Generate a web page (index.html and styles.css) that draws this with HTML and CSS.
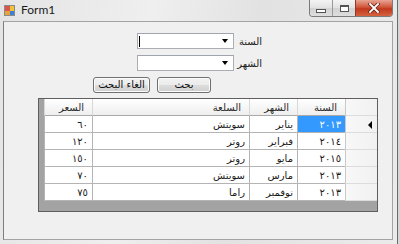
FILE: index.html
```html
<!DOCTYPE html>
<html lang="ar">
<head>
  <meta charset="UTF-8" />
  <title>Form1</title>
  <link rel="stylesheet" href="styles.css">
</head>
<body>
  <div class="window">
    <div class="titlebar">
      <svg class="app-icon" width="11" height="11" viewBox="0 0 11 11">
        <rect x="0.5" y="0.5" width="10" height="10" fill="#fff" stroke="#8a8a8a"/>
        <rect x="1" y="1" width="5" height="5" fill="#d9534f"/>
        <rect x="6" y="1" width="4" height="5" fill="#f2c230"/>
        <rect x="1" y="6" width="5" height="4" fill="#e8a33a"/>
        <rect x="6" y="6" width="4" height="4" fill="#3b7fd6"/>
      </svg>
      <span class="title">Form1</span>
      <div class="caption-btns">
        <span class="cbtn cbtn-min"><i></i></span>
        <span class="cbtn cbtn-max"><i></i></span>
        <span class="cbtn cbtn-close">
          <svg width="12" height="10" viewBox="0 0 12 10">
            <path d="M2 1 L10 9 M10 1 L2 9" stroke="#6b2a1e" stroke-width="3.4" stroke-linecap="square"/>
            <path d="M2 1 L10 9 M10 1 L2 9" stroke="#fff" stroke-width="1.8" stroke-linecap="square"/>
          </svg>
        </span>
      </div>
    </div>

    <div class="client" dir="rtl">
      <div class="field">
        <span class="field-label">السنة</span>
        <div class="combo"><span class="caret"></span><span class="drop"></span></div>
      </div>
      <div class="field">
        <span class="field-label">الشهر</span>
        <div class="combo"><span class="drop"></span></div>
      </div>
      <div class="actions">
        <button class="btn btn-search">بحث</button>
        <button class="btn btn-cancel">الغاء البحث</button>
      </div>

      <div class="grid">
        <table>
          <colgroup>
            <col class="c-rowhead"><col class="c-year"><col class="c-month"><col class="c-item"><col class="c-price">
          </colgroup>
          <thead>
            <tr>
              <th class="rowhead"></th>
              <th>السنة</th>
              <th>الشهر</th>
              <th>السلعة</th>
              <th>السعر</th>
            </tr>
          </thead>
          <tbody id="grid-body"></tbody>
        </table>
      </div>
    </div>
  </div>

  <script>
    const rows = [
      ['٢٠١٣', 'يناير', 'سويتش', '٦٠'],
      ['٢٠١٤', 'فبراير', 'روتر', '١٢٠'],
      ['٢٠١٥', 'مايو', 'روتر', '١٥٠'],
      ['٢٠١٣', 'مارس', 'سويتش', '٧٠'],
      ['٢٠١٣', 'نوفمبر', 'راما', '٧٥']
    ];
    const tbody = document.getElementById('grid-body');

    rows.forEach((r, idx) => {
      const tr = document.createElement('tr');
      tr.innerHTML = `
        <td class="rowhead">${idx === 0 ? '<span class="current"></span>' : ''}</td>
        <td class="${idx === 0 ? 'selected' : ''}">${r[0]}</td>
        <td>${r[1]}</td>
        <td>${r[2]}</td>
        <td>${r[3]}</td>
      `;
      tbody.appendChild(tr);
    });
  </script>
</body>
</html>
```

FILE: styles.css
```css
body {
  margin: 0;
  background-color: #d6d6d6;
  font-family: 'DejaVu Sans', sans-serif;
  font-size: 10px;
  color: #000;
}

.window {
  width: 398px;
  height: 244px;
  box-sizing: border-box;
  border-right: 1px solid #6c6c6c;
  background: linear-gradient(100deg, #e4e4e4 0%, #efefef 35%, #e2e2e2 60%, #ebebeb 100%);
  overflow: hidden;
}

/* title bar */
.titlebar {
  height: 21px;
  display: flex;
  align-items: center;
  position: relative;
}

.app-icon {
  margin-left: 4px;
  margin-top: -1px;
}

.title {
  margin-left: 6px;
  font-family: 'Lato', sans-serif;
  font-size: 12px;
  color: #1b1b1b;
  margin-top: -2px;
}

.caption-btns {
  margin-left: auto;
  margin-right: 4px;
  align-self: flex-start;
  display: flex;
  height: 16px;
  border: 1px solid #7b7b7b;
  border-top: none;
  border-radius: 0 0 4px 4px;
  overflow: hidden;
}

.cbtn {
  width: 22px;
  display: flex;
  align-items: center;
  justify-content: center;
  background: linear-gradient(#f4f4f4, #e2e2e2 50%, #d2d2d2 51%, #dedede);
  border-left: 1px solid #9a9a9a;
}

.cbtn-min {
  border-left: none;
}

.cbtn-min i {
  width: 8px;
  height: 2px;
  margin-top: 5px;
  background: #fff;
  border: 1px solid #535353;
}

.cbtn-max i {
  width: 7px;
  height: 5px;
  background: #fff;
  border: 1px solid #535353;
  box-shadow: inset 0 1px 0 #535353, inset 0 0 0 2px #fff;
}

.cbtn-close {
  width: 36px;
  background: linear-gradient(#e8a493, #d0553a 45%, #c1381d 55%, #d4633f);
  border-left: 1px solid #8a3b2a;
}

/* client area */
.client {
  margin-left: 3px;
  width: 390px;
  height: 219px;
  box-sizing: border-box;
  border: 1px solid #a3a3a3;
  border-left-color: #7e7e7e;
  background-color: #f0f0f0;
  padding-top: 11px;
}

.field {
  display: flex;
  align-items: center;
  height: 16px;
  margin-right: 130px;
  margin-bottom: 6px;
}

.field-label {
  width: 28px;
  text-align: right;
  color: #222;
}

.combo {
  width: 97px;
  height: 16px;
  box-sizing: border-box;
  border: 1px solid #abadb3;
  border-top-color: #a0a4ae;
  background: #fff;
  position: relative;
  display: flex;
  direction: ltr;
  align-items: center;
}

.caret {
  width: 1px;
  height: 11px;
  background: #000;
  margin-left: 1px;
}

.drop {
  position: absolute;
  right: 5px;
  top: 5px;
  width: 0;
  height: 0;
  border-top: 4px solid #000;
  border-left: 3.5px solid transparent;
  border-right: 3.5px solid transparent;
}

.actions {
  display: flex;
  gap: 7px;
  margin-right: 181px;
}

.btn {
  height: 16px;
  padding: 0;
  font-family: 'DejaVu Sans', sans-serif;
  font-size: 10px;
  color: #111;
  border: 1px solid #707070;
  border-radius: 3px;
  background: linear-gradient(#f2f2f2, #ebebeb 50%, #dddddd 51%, #cfcfcf);
  box-shadow: inset 0 0 0 1px #fcfcfc;
  line-height: 12px;
}

.btn-search {
  width: 54px;
}

.btn-cancel {
  width: 57px;
}

/* data grid */
.grid {
  margin-top: 5px;
  margin-right: 14px;
  width: 340px;
  height: 114px;
  box-sizing: border-box;
  border: 1px solid #5f5f5f;
  background-color: #a3a3a3;
}

.grid table {
  width: 333px;
  table-layout: fixed;
  border-collapse: separate;
  border-spacing: 0;
}

.c-rowhead { width: 32px; }
.c-year { width: 48px; }
.c-month { width: 48px; }
.c-item { width: 157px; }
.c-price { width: 48px; }

.grid th,
.grid td {
  height: 16px;
  padding: 0 4px;
  text-align: right;
  white-space: nowrap;
  overflow: hidden;
  font-weight: normal;
  color: #1a1a1a;
  border-bottom: 1px solid #b4b4b4;
  border-left: 1px solid #b4b4b4;
  background: #fff;
}

.grid th {
  padding-right: 8px;
  color: #2a2a2a;
  background: linear-gradient(#ffffff, #f7f7f7 50%, #eeeeee);
  border-left-color: #d8d8d8;
  border-bottom-color: #a9a9a9;
}

.grid th.rowhead,
.grid td.rowhead {
  background: linear-gradient(90deg, #f8f8f8, #f1f1f1);
  border-left-color: #c9c9c9;
  border-bottom-color: #dcdcdc;
  padding-right: 5px;
}

.grid td.selected {
  background: #3399ff;
  color: #fff;
}

.current {
  display: inline-block;
  width: 0;
  height: 0;
  border-right: 4px solid #000;
  border-top: 4px solid transparent;
  border-bottom: 4px solid transparent;
  vertical-align: middle;
}
```
